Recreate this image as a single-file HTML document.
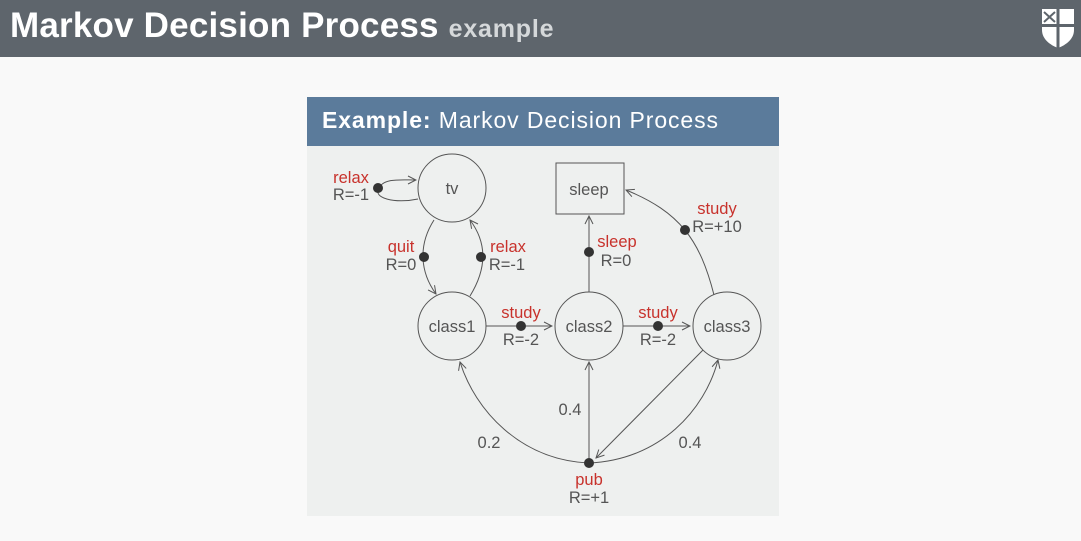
<!DOCTYPE html>
<html><head><meta charset="utf-8"><style>
body{margin:0;width:1081px;height:541px;background:#f9f9f9;font-family:"Liberation Sans","DejaVu Sans",sans-serif;overflow:hidden;position:relative}
.top{position:absolute;left:0;top:0;width:1081px;height:57px;background:#5e656c}
.t{position:absolute;left:10px;top:6px;color:#fff;font-weight:bold;font-size:35px;letter-spacing:0.2px}
.t span{font-size:25px;color:#d5d8da;font-weight:bold;letter-spacing:0.8px}
.box{position:absolute;left:307px;top:97px;width:472px;height:419px;background:#eef0ef}
.bh{height:49px;background:#5b7b9b;color:#fff;font-size:23px;line-height:47px;padding-left:15px;letter-spacing:0.9px}
</style></head><body>
<div class="top"><div class="t">Markov Decision Process <span>example</span></div>
<svg style="position:absolute;left:1041px;top:8px" width="34" height="40" viewBox="0 0 34 40">
<path d="M1 1 H33 V22 C33 31 25 37 17 40 C9 37 1 31 1 22 Z" fill="#fff"/>
<rect x="15.5" y="1" width="3" height="39" fill="#5e656c"/>
<rect x="1" y="16" width="32" height="3" fill="#5e656c"/>
<path d="M3 4 L14 14 M14 4 L3 14" stroke="#5e656c" stroke-width="2"/>
</svg></div>
<div class="box"><div class="bh"><b>Example:</b> Markov Decision Process</div></div>
<svg style="position:absolute;left:0;top:0" width="1081" height="541" font-family="Liberation Sans, DejaVu Sans, sans-serif" font-size="16.5">
<defs><marker id="a" markerWidth="10" markerHeight="10" refX="9" refY="5" orient="auto" markerUnits="userSpaceOnUse"><path d="M1 1 L9 5 L1 9" fill="none" stroke="#555" stroke-width="1"/></marker></defs>
<g fill="none" stroke="#555" stroke-width="1">
<circle cx="452" cy="188" r="34"/>
<rect x="556" y="163" width="68" height="51"/>
<circle cx="452" cy="326" r="34"/>
<circle cx="589" cy="326" r="34"/>
<circle cx="727" cy="326" r="34"/>
<path d="M418 199 C395 204 372 198 379 188 C384 178 400 180 416 180" marker-end="url(#a)"/>
<path d="M434 220 C418 245 420 272 436 294" marker-end="url(#a)"/>
<path d="M470 296 C486 270 488 244 470 220" marker-end="url(#a)"/>
<path d="M486 326 L552 326" marker-end="url(#a)"/>
<path d="M623 326 L690 326" marker-end="url(#a)"/>
<path d="M589 292 L589 216" marker-end="url(#a)"/>
<path d="M714 295 C700 240 680 212 626 190" marker-end="url(#a)"/>
<path d="M589 463 L589 362" marker-end="url(#a)"/>
<path d="M589 463 C520 460 475 410 460 362" marker-end="url(#a)"/>
<path d="M589 463 C660 460 705 410 718 360" marker-end="url(#a)"/>
<path d="M703 350 L596 458" marker-end="url(#a)"/>
</g>
<g fill="#333">
<circle cx="378" cy="188" r="5"/><circle cx="424" cy="257" r="5"/><circle cx="481" cy="257" r="5"/>
<circle cx="521" cy="326" r="5"/><circle cx="658" cy="326" r="5"/><circle cx="589" cy="252" r="5"/>
<circle cx="685" cy="230" r="5"/><circle cx="589" cy="463" r="5"/>
</g>
<g fill="#555" text-anchor="middle">
<text x="452" y="194">tv</text><text x="589" y="195">sleep</text>
<text x="452" y="332">class1</text><text x="589" y="332">class2</text><text x="727" y="332">class3</text>
<text x="351" y="200">R=-1</text><text x="401" y="270">R=0</text><text x="507" y="270">R=-1</text>
<text x="521" y="345">R=-2</text><text x="658" y="345">R=-2</text><text x="616" y="266">R=0</text>
<text x="717" y="232">R=+10</text><text x="589" y="503">R=+1</text>
<text x="570" y="415">0.4</text><text x="489" y="448">0.2</text><text x="690" y="448">0.4</text>
</g>
<g fill="#c8322c" text-anchor="middle">
<text x="351" y="183">relax</text><text x="401" y="252">quit</text><text x="508" y="252">relax</text>
<text x="521" y="318">study</text><text x="658" y="318">study</text><text x="617" y="247">sleep</text>
<text x="717" y="214">study</text><text x="589" y="485">pub</text>
</g>
</svg>
</body></html>
